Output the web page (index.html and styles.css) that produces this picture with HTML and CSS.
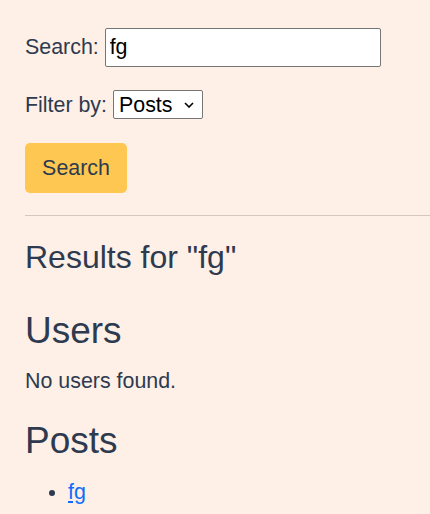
FILE: index.html
```html
<!DOCTYPE html>
<html>
<head>
<meta charset="utf-8">
<link rel="stylesheet" href="styles.css">
</head>
<body>
<main class="page">
  <form class="search-form">
    <div class="row row-search">
      <label for="q">Search:</label> <input id="q" class="text-input" type="text" value="fg">
    </div>
    <div class="row row-filter">
      <label for="f">Filter by:</label> <select id="f" class="select"><option>Posts</option><option>Users</option></select>
    </div>
    <div class="row row-button">
      <button type="button" class="btn">Search</button>
    </div>
  </form>
  <hr class="divider">
  <h2 class="results-title">Results for "fg"</h2>
  <h1 class="section-title section-users">Users</h1>
  <p class="empty">No users found.</p>
  <h1 class="section-title section-posts">Posts</h1>
  <ul class="result-list">
    <li><a href="#" class="result-link">fg</a></li>
  </ul>
</main>
</body>
</html>
```
FILE: styles.css
```css
html, body {
  margin: 0;
  padding: 0;
  background: #fef0e6;
}
body {
  font-family: "Liberation Sans", Arial, sans-serif;
  font-size: 21.4px;
  color: #2d3a4f;
}
.page {
  padding: 28px 0 0 25px;
}
.search-form {
  margin: 0;
}
.row {
  margin: 0;
}
.text-input {
  font-family: "Liberation Sans", Arial, sans-serif;
  font-size: 21.4px;
  color: #000;
  box-sizing: border-box;
  width: 276px;
  height: 39px;
  padding: 0 4px;
  border: 1px solid #767676;
  border-radius: 2px;
  background: #fff;
  vertical-align: baseline;
}
.row-filter {
  margin-top: 23px;
}
.select {
  -webkit-appearance: none;
  appearance: none;
  font-family: "Liberation Sans", Arial, sans-serif;
  font-size: 21.4px;
  color: #000;
  background-color: #fff;
  background-image: url("data:image/svg+xml;utf8,<svg xmlns='http://www.w3.org/2000/svg' width='10' height='6' viewBox='0 0 10 6'><path d='M1 1l4 4 4-4' fill='none' stroke='black' stroke-width='1.6'/></svg>");
  background-repeat: no-repeat;
  background-position: right 8px center;
  background-size: 10px 6px;
  border: 1px solid #767676;
  border-radius: 2px;
  box-sizing: border-box;
  height: 29px;
  width: 90px;
  padding: 0 20px 0 5px;
}
.row-button {
  margin-top: 24px;
}
.btn {
  font-family: "Liberation Sans", Arial, sans-serif;
  font-size: 21.4px;
  color: #2d3a4f;
  background: #fec751;
  border: none;
  border-radius: 5px;
  padding: 13px 17px;
  line-height: normal;
  height: 50px;
  width: 102px;
}
.divider {
  border: none;
  border-top: 1px solid #d3c7bf;
  margin: 22px 0 0 0;
}
.results-title {
  font-size: 32px;
  font-weight: normal;
  margin: 23px 0 0 0;
}
.section-title {
  font-size: 37px;
  font-weight: normal;
  margin: 0;
}
.section-users {
  margin-top: 34px;
}
.empty {
  margin: 17px 0 0 0;
}
.section-posts {
  margin-top: 26px;
}
.result-list {
  margin: 18px 0 0 0;
  padding-left: 43px;
}
.result-link {
  color: #0d6efd;
}
```
